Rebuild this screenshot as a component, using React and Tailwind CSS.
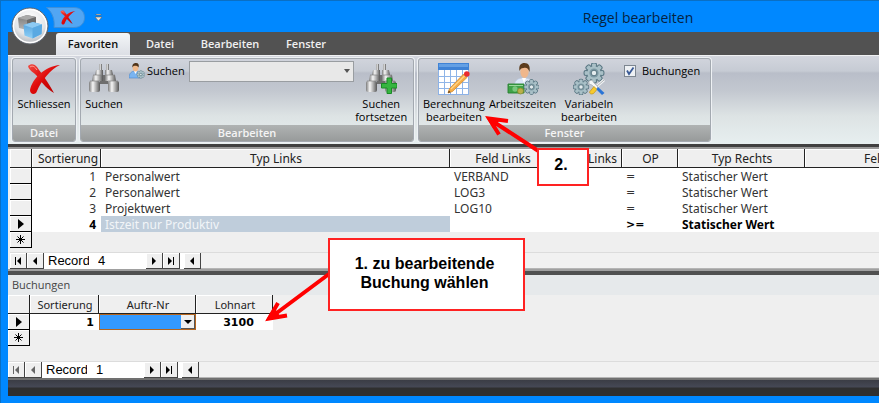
import React from "react";

const UI = "font-['Open_Sans','Noto_Sans',sans-serif]";
const GRID = "font-['Noto_Sans','DejaVu_Sans',sans-serif]";

/* ---------- icons ---------- */

function RedCross({ className }) {
  return (
    <svg className={className} viewBox="0 0 32 32" aria-hidden="true">
      <defs>
        <linearGradient id="red" x1="0" y1="0" x2="1" y2="1">
          <stop offset="0" stopColor="#f0524a" />
          <stop offset="0.45" stopColor="#e00b0b" />
          <stop offset="1" stopColor="#b80000" />
        </linearGradient>
      </defs>
      <path d="M0 3C3 0 7 1 9 4C14 11 20 19 26 30C21 27 14 21 9 13C6 9 1 8 0 3Z" fill="url(#red)" />
      <path d="M32 2C23 6 13 18 9 28C8 32 2 32 2 27C4 16 17 3 32 2Z" fill="url(#red)" />
      <path d="M2 4C5 2 7 4 9 7" stroke="#ff9b90" strokeWidth="1" fill="none" />
    </svg>
  );
}

function Cubes({ className }) {
  return (
    <svg className={className} viewBox="0 0 38 38" aria-hidden="true">
      <defs>
        <radialGradient id="orb" cx="0.5" cy="0.3" r="0.75">
          <stop offset="0" stopColor="#ffffff" />
          <stop offset="0.6" stopColor="#e3e5e8" />
          <stop offset="1" stopColor="#a6aab0" />
        </radialGradient>
        <linearGradient id="cubeFront" x1="0" y1="0" x2="0" y2="1">
          <stop offset="0" stopColor="#4f9fdc" />
          <stop offset="1" stopColor="#8fd0f7" />
        </linearGradient>
        <linearGradient id="cubeGrey" x1="0" y1="0" x2="0" y2="1">
          <stop offset="0" stopColor="#777777" />
          <stop offset="1" stopColor="#b5b5b5" />
        </linearGradient>
      </defs>
      <circle cx="19" cy="19" r="18" fill="url(#orb)" stroke="#5b6068" />
      <circle cx="19" cy="19" r="16.5" fill="none" stroke="#fff" strokeWidth="1.4" />
      <path d="M7 11L16 8L25 10V19L16 23L8 21Z" fill="url(#cubeGrey)" />
      <path d="M7 11L16 8L25 10L16 13Z" fill="#a9a9a9" />
      <path d="M16 13L25 10V19L16 22.500Z" fill="#6c6c6c" />
      <path d="M12.500 18L22 15L31 17.500L30.500 27L21.500 31.500L13.500 28.500Z" fill="url(#cubeFront)" />
      <path d="M12.500 18L22 15L31 17.500L21.500 21Z" fill="#8dcaf3" />
      <path d="M21.500 21L31 17.500L30.500 27L21.500 31.500Z" fill="#5aa9e2" />
    </svg>
  );
}

function Binoculars({ className, plus }) {
  return (
    <svg className={className} viewBox="0 0 32 32" aria-hidden="true">
      <defs>
        <linearGradient id="barrel" x1="0" y1="0" x2="1" y2="0">
          <stop offset="0" stopColor="#7c7c7c" />
          <stop offset="0.35" stopColor="#f6f6f6" />
          <stop offset="0.65" stopColor="#aeaeae" />
          <stop offset="1" stopColor="#565656" />
        </linearGradient>
      </defs>
      <path d="M12 12H20V21H12Z" fill="#6e6e6e" />
      <rect x="11" y="1" width="3" height="6" fill="url(#barrel)" />
      <rect x="18" y="1" width="3" height="6" fill="url(#barrel)" />
      <path d="M8 7H15V12H7Z" fill="url(#barrel)" />
      <path d="M17 7H24L25 12H17Z" fill="url(#barrel)" />
      <path d="M5 12H15V18H4Z" fill="url(#barrel)" />
      <path d="M17 12H27L28 18H17Z" fill="url(#barrel)" />
      <rect x="1" y="18" width="11" height="11" rx="2" fill="url(#barrel)" />
      <rect x="20" y="18" width="11" height="11" rx="2" fill="url(#barrel)" />
      <path d="M5 12H14M18 12H27M2 18H12M20 18H30" stroke="#858585" strokeWidth="0.7" />
      {plus && (
        <path
          d="M22 15H26.500V20.500H32V25H26.500V30.500H22V25H16.500V20.500H22Z"
          fill="#36b540"
          stroke="#1a8a26"
          strokeWidth="1"
        />
      )}
    </svg>
  );
}

function Gear({ x, y, r }) {
  return (
    <g transform={`translate(${x} ${y}) scale(${r / 10})`}>
      {[0, 45, 90, 135].map((a) => (
        <rect key={a} x="-2.400" y="-9.800" width="4.800" height="19.600" rx="1.400" fill="#a9c0c7" stroke="#5d7a86" strokeWidth="1.300" transform={`rotate(${a})`} />
      ))}
      <circle r="7" fill="#a9c0c7" stroke="#5d7a86" strokeWidth="0.900" />
      {[0, 45, 90, 135].map((a) => (
        <rect key={a} x="-1.800" y="-9.200" width="3.600" height="18.400" rx="1" fill="#a9c0c7" transform={`rotate(${a})`} />
      ))}
      <circle r="4.600" fill="#7d9aa4" />
      <circle r="2.800" fill="#e4ecee" stroke="#4f6c78" strokeWidth="0.900" />
    </g>
  );
}

function UserGear({ className }) {
  return (
    <svg className={className} viewBox="0 0 16 16" aria-hidden="true">
      <path d="M0 15C0 10 3 8 6 8C9 8 11 10 11 15Z" fill="#7ab4f0" stroke="#4a88cc" strokeWidth="0.6" />
      <path d="M5 8L6.500 11L8 8Z" fill="#fff" />
      <ellipse cx="6.500" cy="5" rx="2.800" ry="3.400" fill="#f0b98a" />
      <path d="M3.400 4.500C3 1 5 0 7 0C9.500 0 10.300 2 9.600 4.500C9 3 7 2.500 5.500 2.800C4 3 4 4 3.400 4.500Z" fill="#4f3318" />
      <Gear x="11.800" y="11.500" r="4" />
    </svg>
  );
}

function GridPencil({ className }) {
  return (
    <svg className={className} viewBox="0 0 32 32" aria-hidden="true">
      <rect x="0.500" y="0.500" width="30" height="31" fill="#fff" stroke="#8db2e6" />
      <rect x="0" y="0" width="31" height="7" fill="#3f83d6" />
      <rect x="1" y="1" width="29" height="3" fill="#64a0e4" />
      <path d="M6.500 7V31M12.500 7V31M18.500 7V31M24.500 7V31M1 13.500H30M1 19.500H30M1 25.500H30" stroke="#8fb5e8" />
      <path d="M10 30L11.500 25.500L25.500 11L29 14.500L14.500 28.500Z" fill="#f5ad45" stroke="#cf8428" strokeWidth="0.700" />
      <path d="M13 26L27 12.500" stroke="#ffd48a" strokeWidth="1.200" />
      <circle cx="28.800" cy="11" r="2.800" fill="#ea2a2e" />
      <path d="M10 30L10.800 27.500L12.500 29.200Z" fill="#5a3b1a" />
    </svg>
  );
}

function MoneyUser({ className }) {
  return (
    <svg className={className} viewBox="0 0 32 32" aria-hidden="true">
      <path d="M7 25C7 17 11 15 17 15C23 15 26 18 26 25Z" fill="#dbe6f7" stroke="#b9c9e2" strokeWidth="0.700" />
      <path d="M15 15L17 20L19 15Z" fill="#fff" />
      <ellipse cx="17.500" cy="8.500" rx="4.200" ry="6.500" fill="#efb78c" />
      <path d="M12.500 8C11.500 2 14 0 17.500 0C21.500 0 23.500 3 22.500 9C21.500 5 19 4 16.500 5C14 5 13.500 6 12.500 8Z" fill="#5b3b1c" />
      <path d="M1 21H17V30H1Z" fill="#3fa348" stroke="#27802f" strokeWidth="0.900" />
      <path d="M2 22.500H16" stroke="#9bd89d" />
      <ellipse cx="8" cy="26" rx="2.600" ry="2.800" fill="#79c67e" />
      <circle cx="13.500" cy="28" r="3" fill="#b9b04a" stroke="#7f8a2c" strokeWidth="0.700" />
      <Gear x="24.500" y="24" r="7.500" />
    </svg>
  );
}

function GearsTools({ className }) {
  return (
    <svg className={className} viewBox="0 0 32 32" aria-hidden="true">
      <Gear x="21" y="10" r="10" />
      <Gear x="8" y="24" r="7.800" />
      <path d="M31 17L22 25" stroke="#f2f4f5" strokeWidth="3" />
      <path d="M31 17L23 24" stroke="#8f979b" strokeWidth="0.700" />
      <path d="M16 18L19 17L21 20L25 24L23 26L19 22L16 21Z" fill="#f5f7f8" stroke="#a8afb3" strokeWidth="0.700" />
      <path d="M21 23.500L24 26.500L20.500 30.500Q17 32 16.500 29Z" fill="#f7ca2d" stroke="#c2951a" strokeWidth="0.700" />
      <path d="M25 24L31.500 30L29 32L23.500 26.500Z" fill="#2a74d6" />
    </svg>
  );
}

function Glyph({ d, bar, className = "fill-black" }) {
  return (
    <svg className={`h-2 w-2 ${className}`} viewBox="0 0 8 8" aria-hidden="true">
      <path d={d} />
      {bar && <path d={bar} />}
    </svg>
  );
}

const LEFT = "M6 0V8L2 4Z";
const RIGHT = "M2 0V8L6 4Z";

/* ---------- ribbon ---------- */

function Group({ title, className, children }) {
  return (
    <fieldset className={`flex shrink-0 flex-col justify-between rounded-[3px] border border-[#a3a9b0] shadow-[0_0_0_1px_#eef1f4] ${className}`}>
      <div className="flex items-start">{children}</div>
      <div className="h-4 rounded-b-[2px] bg-linear-to-b from-[#b0b3b3] to-[#989b9b] text-center text-[11px] leading-4 font-semibold text-[#f4f4f4]">
        {title}
      </div>
    </fieldset>
  );
}

function BigButton({ icon, label, className }) {
  return (
    <button type="button" className={`flex flex-col items-center gap-[2px] pt-1 text-[11px] leading-[13px] font-medium whitespace-pre-line ${className}`}>
      {icon}
      <span>{label}</span>
    </button>
  );
}

function Ribbon() {
  return (
    <div className="flex h-[89px] gap-1 border-t border-[#f0f1f3] bg-[linear-gradient(to_bottom,#d3d6de_0,#c6cbd4_15px,#b9bec9_17px,#c3c8d0_35px,#dde3e4_60px,#e7eff0_100%)] px-1 pt-[2px] pb-[2px] text-black">
      <Group title="Datei" className="w-16">
        <BigButton className="w-full" icon={<RedCross className="h-8 w-8" />} label="Schliessen" />
      </Group>
      <Group title="Bearbeiten" className="w-[334px]">
        <BigButton className="w-[46px]" icon={<Binoculars className="h-8 w-8" />} label="Suchen" />
        <label htmlFor="suchen" className="mt-1 ml-[2px] flex items-center gap-[2px] text-[11px] leading-4 font-medium">
          <UserGear className="h-4 w-4" />
          Suchen
        </label>
        <div className="relative mt-[2px] ml-1 w-[165px]">
          <select id="suchen" className="block h-[21px] w-full appearance-none border border-[#999da1] bg-[#e8e8e8] text-[11px]" />
          <svg className="pointer-events-none absolute top-2 right-1 h-1 w-[6px] fill-[#555]" viewBox="0 0 6 4" aria-hidden="true">
            <path d="M0 0H6L3 4Z" />
          </svg>
        </div>
        <BigButton className="w-[55px]" icon={<Binoculars plus className="h-8 w-8" />} label={"Suchen\nfortsetzen"} />
      </Group>
      <Group title="Fenster" className="w-[293px]">
        <BigButton className="w-[70px]" icon={<GridPencil className="h-8 w-8" />} label={"Berechnung\nbearbeiten"} />
        <BigButton className="w-[67px]" icon={<MoneyUser className="h-8 w-8" />} label="Arbeitszeiten" />
        <BigButton className="w-[66px]" icon={<GearsTools className="h-8 w-8" />} label={"Variabeln\nbearbeiten"} />
        <label className="mt-1 ml-[2px] flex items-center gap-[6px] text-[11px] leading-4 font-medium">
          <span className="relative block h-3 w-3">
            <input type="checkbox" defaultChecked className="peer block h-3 w-3 appearance-none border border-[#7d8690] bg-[#eef1f4]" />
            <svg className="pointer-events-none absolute inset-0 hidden h-3 w-3 peer-checked:block" viewBox="0 0 12 12" aria-hidden="true">
              <path d="M3 5.500L5 9L9.500 2.500" stroke="#3a5a96" strokeWidth="1.800" fill="none" />
            </svg>
          </span>
          Buchungen
        </label>
      </Group>
    </div>
  );
}

/* ---------- data grids ---------- */

function Marker({ kind }) {
  return (
    <td className="border-r border-b border-black bg-[#efefef] p-0 shadow-[inset_1px_1px_0_#fff]">
      {kind === "current" && (
        <svg className="mx-auto h-[10px] w-[6px]" viewBox="0 0 6 10" aria-label="aktuell">
          <path d="M0 0L6 5L0 10Z" />
        </svg>
      )}
      {kind === "new" && (
        <svg className="mx-auto h-[9px] w-[9px] stroke-black" viewBox="0 0 9 9" aria-label="neu">
          <path d="M4.500 0V9M0 4.500H9M1.500 1.500L7.500 7.500M7.500 1.500L1.500 7.500" fill="none" />
        </svg>
      )}
    </td>
  );
}

function Head({ children, className = "text-center" }) {
  return (
    <th scope="col" className={`border-r border-b border-[#222] bg-[#efefef] py-0 pr-1 pl-[6px] font-normal whitespace-nowrap shadow-[inset_1px_1px_0_#fff] ${className}`}>
      {children}
    </th>
  );
}

const NAV = "flex w-[17px] items-center justify-center border-r border-b border-[#444] bg-[#efefef] shadow-[inset_1px_1px_0_#fff]";

function RecordBar({ value, id, muted }) {
  const tone = muted ? "fill-[#666]" : "fill-black";
  return (
    <div className="flex h-[17px] border-t border-[#dcdcdc] bg-[#efefef] font-['Liberation_Sans',Arial,sans-serif] text-[13px] leading-4">
      <button type="button" aria-label="Erster" className={NAV}>
        <Glyph d="M7 0V8L3 4Z" bar="M1 0H2V8H1Z" className={tone} />
      </button>
      <button type="button" aria-label="Zurück" className={NAV}>
        <Glyph d={LEFT} className={tone} />
      </button>
      <label htmlFor={id} className="w-[45px] bg-white pl-1">Record</label>
      <input id={id} defaultValue={value} className="w-[57px] bg-white pl-[9px] outline-none" />
      <button type="button" aria-label="Weiter" className={NAV}>
        <Glyph d={RIGHT} />
      </button>
      <button type="button" aria-label="Letzter" className={NAV}>
        <Glyph d="M1 0V8L5 4Z" bar="M6 0H7V8H6Z" />
      </button>
      <span className="w-1 bg-white" />
      <button type="button" aria-label="Nach links" className={NAV}>
        <Glyph d={LEFT} />
      </button>
      <span className="flex-1 border-b border-[#b5b5b5] bg-[#f1f1f1]" />
    </div>
  );
}

const RULES = [
  { nr: 1, typ: "Personalwert", feld: "VERBAND", op: "=", rechts: "Statischer Wert" },
  { nr: 2, typ: "Personalwert", feld: "LOG3", op: "=", rechts: "Statischer Wert" },
  { nr: 3, typ: "Projektwert", feld: "LOG10", op: "=", rechts: "Statischer Wert" },
  { nr: 4, typ: "Istzeit nur Produktiv", feld: "", op: ">=", rechts: "Statischer Wert", current: true },
];

function RuleGrid() {
  return (
    <div className="overflow-hidden bg-[#efefef] pb-1 pl-[2px]">
      <table className={`w-[976px] table-fixed border-separate border-spacing-0 text-[12px] leading-[15px] text-[#333] ${GRID}`}>
        <colgroup>
          <col className="w-[22px]" />
          <col className="w-[69px]" />
          <col className="w-[349px]" />
          <col className="w-[105px]" />
          <col className="w-[67px]" />
          <col className="w-[56px]" />
          <col className="w-[127px]" />
          <col />
        </colgroup>
        <thead>
          <tr className="h-[19px] text-[#222]">
            <Head />
            <Head>Sortierung</Head>
            <Head>Typ Links</Head>
            <Head>Feld Links</Head>
            <Head className="text-right">Links</Head>
            <Head>OP</Head>
            <Head>Typ Rechts</Head>
            <Head>Feld Rechts</Head>
          </tr>
        </thead>
        <tbody>
          {RULES.map((r) => (
            <tr key={r.nr} className={`h-4 bg-white ${r.current ? "font-bold text-black" : ""}`}>
              <Marker kind={r.current ? "current" : "none"} />
              <td className="p-0 pr-[5px] text-right">{r.nr}</td>
              <td className={r.current ? "bg-[#bfcddb] p-0 pl-1 font-normal text-[#f2f5f8]" : "p-0 pl-1"}>{r.typ}</td>
              <td className="p-0 pl-1">{r.feld}</td>
              <td className="p-0" />
              <td className="p-0 pl-1 font-['DejaVu_Sans',sans-serif] text-[11px]">{r.op}</td>
              <td className="p-0 pl-1">{r.rechts}</td>
              <td className="p-0" />
            </tr>
          ))}
          <tr className="h-4">
            <Marker kind="new" />
            <td colSpan="7" className="p-0" />
          </tr>
        </tbody>
      </table>
    </div>
  );
}

function BookingGrid() {
  return (
    <section className="bg-[#efefef]">
      <h2 className={`h-5 bg-[#e6e9eb] pl-1 text-[11px] leading-5 font-medium text-[#444] ${UI}`}>Buchungen</h2>
      <table className={`w-[265px] table-fixed border-separate border-spacing-0 text-[11px] leading-[15px] text-[#222] ${GRID}`}>
        <colgroup>
          <col className="w-[22px]" />
          <col className="w-[69px]" />
          <col className="w-[97px]" />
          <col className="w-[77px]" />
        </colgroup>
        <thead>
          <tr className="h-[19px]">
            <Head />
            <Head>Sortierung</Head>
            <Head>Auftr-Nr</Head>
            <Head>Lohnart</Head>
          </tr>
        </thead>
        <tbody className="font-['DejaVu_Sans',sans-serif] font-bold text-black">
          <tr className="h-4 bg-white">
            <Marker kind="current" />
            <td className="p-0 pr-[5px] text-right">1</td>
            <td className="p-0">
              <div className="relative">
                <select aria-label="Auftr-Nr" className="block h-4 w-full appearance-none border border-[#b5651d] bg-[#3399ff]" />
                <span className="pointer-events-none absolute inset-y-px right-px flex w-[14px] items-center justify-center border-r border-b border-[#555] bg-[#efefef]">
                  <svg className="h-1 w-2" viewBox="0 0 8 4" aria-hidden="true">
                    <path d="M0 0H8L4 4Z" />
                  </svg>
                </span>
              </div>
            </td>
            <td className="p-0 pl-2 text-center">3100</td>
          </tr>
          <tr className="h-4">
            <Marker kind="new" />
            <td colSpan="3" className="p-0" />
          </tr>
        </tbody>
      </table>
      <div className="pt-[15px]">
        <RecordBar id="record-buchung" value="1" muted />
      </div>
    </section>
  );
}

/* ---------- window ---------- */

const TABS = [
  { label: "Favoriten", width: "w-[74px]", active: true },
  { label: "Datei", width: "w-[60px]" },
  { label: "Bearbeiten", width: "w-[80px]" },
  { label: "Fenster", width: "w-[72px]" },
];

export default function App() {
  return (
    <div className="relative min-h-screen overflow-hidden border-t border-l border-[#0a6fc4] bg-[#0088ff] pl-[7px] text-black">
      <header className={`flex h-[31px] items-start ${UI}`}>
        <button type="button" aria-label="Schliessen" className="relative mt-[6px] ml-[38px] flex h-[21px] w-[39px] items-center justify-center pl-1">
          <svg className="absolute inset-0 h-[21px] w-[39px]" viewBox="0 0 39 21" aria-hidden="true">
            <path d="M0.500 0.500H28C35 0.500 38.500 5 38.500 10.500C38.500 16 35 20.500 28 20.500H8C9 12 6 5 0.500 0.500Z" fill="#52a6f3" stroke="#3f8fd8" />
          </svg>
          <RedCross className="relative h-[15px] w-4" />
        </button>
        <button type="button" aria-label="Anpassen" className="mt-[13px] ml-[10px]">
          <svg className="h-[8px] w-[7px]" viewBox="0 0 7 8" aria-hidden="true">
            <path d="M1 0H6V1H1ZM0 3H7L3.500 7Z" fill="#e8e2d8" stroke="#5c5650" strokeWidth="0.500" />
          </svg>
        </button>
        <h1 className="flex-1 pl-[295px] text-center text-[14px] leading-[34px] text-[#06233f]">Regel bearbeiten</h1>
      </header>

      <nav className={`flex h-[23px] items-end bg-[#525252] pl-12 text-[11px] font-semibold text-[#f0f0f0] ${UI}`}>
        {TABS.map((t) => (
          <button
            key={t.label}
            type="button"
            className={`${t.width} h-[22px] leading-[22px] ${t.active ? "rounded-t-[3px] bg-linear-to-b from-[#f4f6f8] to-[#dcdfe5] text-[#111]" : ""}`}
          >
            {t.label}
          </button>
        ))}
      </nav>

      <main>
        <div className={UI}>
          <Ribbon />
        </div>
        <div className="h-[5px] border-b-2 border-[#999] bg-[#404040]" />
        <RuleGrid />
        <div className="bg-[#efefef] pl-[2px]">
          <RecordBar id="record-regel" value="4" />
        </div>
        <div className="h-[6px] border-t-2 border-[#a0a0a0] bg-[#505050]" />
        <BookingGrid />
      </main>
      <footer className="h-[18px] border-t-2 border-[#707070] bg-[linear-gradient(to_bottom,#3b3d45_0,#454855_7px,#2f2f2f_8px,#2f2f2f_100%)]" />
      <div className="h-[7px]" />

      <button type="button" aria-label="Menü" className="absolute top-[6px] left-[10px]">
        <Cubes className="h-[38px] w-[38px]" />
      </button>

      <svg className="pointer-events-none absolute top-0 left-0 h-[403px] w-[879px]" viewBox="1 1 879 403" fill="none" stroke="#f00" strokeWidth="4" aria-hidden="true">
        <path d="M540 152L490 119.500M329 274L270 318M508 121L489 118.500L499 134.500M278 303L269 318.500L287 315.500" />
        <path d="M486 117L500 119.500L493.500 129ZM266 320L274 307L280 316Z" fill="#f00" strokeWidth="0" />
      </svg>
      <p className="absolute top-[147px] left-[536px] flex h-[38px] w-[52px] items-center justify-center border-2 border-[#f22] bg-white pr-1 pb-1 font-['Liberation_Sans',Arial,sans-serif] text-[16px] font-bold">
        2.
      </p>
      <p className="absolute top-[237px] left-[327px] flex h-[73px] w-[197px] items-center justify-center border-2 border-[#f22] bg-white pr-1 pb-1 text-center font-['Liberation_Sans',Arial,sans-serif] text-[16px] leading-[19px] font-bold whitespace-pre-line">
        {"1. zu bearbeitende\nBuchung wählen"}
      </p>
    </div>
  );
}
